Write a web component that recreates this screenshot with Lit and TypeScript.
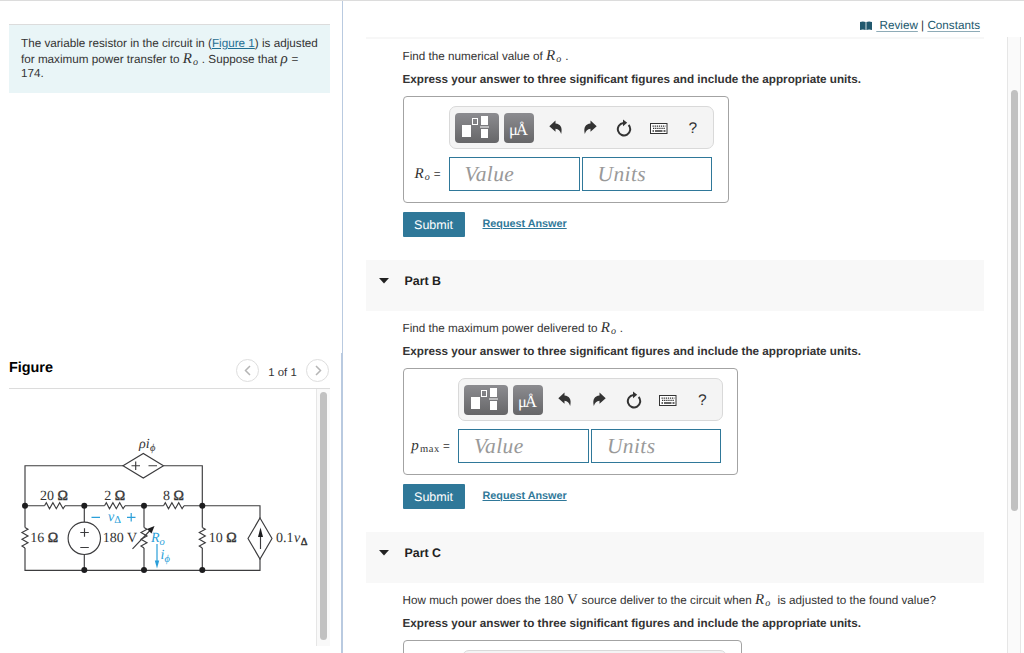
import {LitElement, html, svg, css, nothing} from 'lit';
import {customElement, property} from 'lit/decorators.js';
import {styleMap} from 'lit/directives/style-map.js';

const resistor = (x: number, y: number, vertical = false) => svg`
    <path
        transform="translate(${x} ${y}) rotate(${vertical ? 90 : 0})"
        d="M0 0 L1.8 -3 L5 3 L8.4 -3 L11.8 3 L15.2 -3 L18.6 3 L20.5 0"
    />
`;

@customElement('circuit-figure')
export class CircuitFigure extends LitElement {
    static styles = css`
        :host {
            display: block;
        }
        svg {
            display: block;
        }
        .wire {
            fill: none;
            stroke: #3c3c3e;
            stroke-width: 1.15;
        }
        .shape {
            fill: #fff;
        }
        .dot {
            fill: #1d1d1f;
        }
        text {
            font-family: "Liberation Serif", serif;
            font-size: 14px;
            fill: #333;
        }
        .ohm {
            stroke: #333;
            stroke-width: 0.4;
        }
        .italic {
            font-style: italic;
        }
        .sub {
            font-size: 10.5px;
        }
        .blue {
            fill: #2b9fd9;
        }
        .blue-line {
            fill: none;
            stroke: #2b9fd9;
            stroke-width: 1.2;
        }
    `;
    render() {
        return html`
            <svg width="307" height="256" viewBox="9 389 307 256">
                <g class="wire">
                    <path d="M25 527.5V465.7H123M163.5 465.7H202.3V527.5M202.3 548V570M25 548V570.3H260V559M260 518V505.7H184" />
                    <path d="M25 505.7H44.5M65 505.7H104.5M125 505.7H163.5" />
                    <path d="M84.3 505.7V522M84.3 554.5V570M144 505.7V527.5M144 548V570" />
                    ${resistor(44.5, 505.7)}
                    ${resistor(104.5, 505.7)}
                    ${resistor(163.5, 505.7)}
                    ${resistor(25, 527.5, true)}
                    ${resistor(144, 527.5, true)}
                    ${resistor(202.3, 527.5, true)}
                    <path class="shape" d="M123 465.7L143.3 453.5L163.5 465.7L143.3 478Z" />
                    <path class="shape" d="M260 518L272 538.5L260 559L248 538.5Z" />
                    <circle class="shape" cx="84.3" cy="538.3" r="16.2" />
                    <path d="M131.5 465.7h8.5M135.7 461.5v8.5M148.5 465.7h8.5" />
                    <path d="M80.3 532.5h8.5M84.5 528.2v8.5M80.3 547.5h8.5" />
                    <path d="M132.5 548.8L150 530.5M260.5 549V534" />
                </g>
                <g class="dot">
                    <path d="M154.5 526L151.5 533.5L147 529Z" />
                    <path d="M260.5 527.5L263 537H258Z" />
                    <circle cx="25" cy="505.7" r="3" />
                    <circle cx="84.3" cy="505.7" r="3" />
                    <circle cx="144" cy="505.7" r="3" />
                    <circle cx="202.3" cy="505.7" r="3" />
                    <circle cx="84.3" cy="570" r="3" />
                    <circle cx="144" cy="570" r="3" />
                    <circle cx="202.3" cy="570" r="3" />
                </g>
                <text class="italic" x="139" y="448">ρi<tspan class="sub" dx="0.5" dy="2.5">ϕ</tspan></text>
                <text x="40" y="499.5">20 <tspan class="ohm">Ω</tspan></text>
                <text x="104.3" y="499.5">2 <tspan class="ohm">Ω</tspan></text>
                <text x="163" y="499.5">8 <tspan class="ohm">Ω</tspan></text>
                <text x="30.2" y="542">16 <tspan class="ohm">Ω</tspan></text>
                <text x="102.7" y="542">180 V</text>
                <text x="208.7" y="542">10 <tspan class="ohm">Ω</tspan></text>
                <text x="276" y="542">0.1<tspan class="italic" dx="0.5">v</tspan><tspan class="sub ohm" dx="0.5" dy="2.8">Δ</tspan></text>
                <g class="blue-line">
                    <path d="M91.5 517.3h8.5M127 517.3h8.5M131.2 513v8.5M157 544V562" />
                </g>
                <path class="blue" d="M157 568.5L154.8 560.5H159.2Z" />
                <text class="blue italic" x="108" y="520.5">v<tspan class="sub" dy="2" font-style="normal">Δ</tspan></text>
                <text class="blue italic" x="151" y="542">R<tspan class="sub" dy="2.5">o</tspan></text>
                <text class="blue italic" x="160.5" y="559">i<tspan class="sub" dy="3">ϕ</tspan></text>
            </svg>
        `;
    }
}

@customElement('answer-box')
export class AnswerBox extends LitElement {
    @property({type: Number}) labelWidth = 45;
    @property({type: Boolean}) loading = false;

    static styles = css`
        :host {
            display: block;
        }
        .box {
            display: inline-grid;
            grid-template-columns: auto 265px;
            grid-template-rows: 43px 34px;
            row-gap: 8px;
            box-sizing: border-box;
            height: 107px;
            padding: 9px 14px 0 0;
            border: 1px solid #a3a3a3;
            border-radius: 4px;
            vertical-align: top;
        }
        .toolbar {
            grid-column: 2;
            display: flex;
            align-items: center;
            box-sizing: border-box;
            padding-left: 5px;
            background: #f4f4f4;
            border: 1px solid #d9d9d9;
            border-radius: 7px;
        }
        .key {
            width: 30px;
            height: 30px;
            margin-right: 5px;
            border-radius: 4px;
            background: linear-gradient(#8c8c90, #666668);
            color: #fff;
        }
        .key.wide {
            width: 44px;
        }
        svg {
            display: block;
        }
        .key text {
            font: 16.5px "Liberation Serif", serif;
            fill: #fff;
        }
        .tool {
            width: 34.3px;
            display: flex;
            justify-content: center;
        }
        .help {
            padding-top: 2px;
            color: #333;
            font-size: 15.5px;
        }
        .label {
            box-sizing: border-box;
            padding-right: 8px;
            align-self: center;
            text-align: right;
            white-space: nowrap;
        }
        .fields {
            display: flex;
            gap: 2px;
        }
        .field {
            box-sizing: border-box;
            width: 131px;
            height: 34px;
            padding-left: 15px;
            border: 1px solid #2f7899;
            background: #fff;
            color: #999;
            font: italic 21.5px/32px "Liberation Serif", serif;
            letter-spacing: 0.4px;
        }
        .field + .field {
            width: 130px;
        }
    `;
    tools() {
        return html`
            <div class="key wide">
                <svg width="44" height="30" fill="#fff">
                    <rect x="7" y="12" width="9" height="12" />
                    <rect x="17.5" y="5.5" width="5" height="6" fill="none" stroke="#fff" />
                    <rect x="26" y="3" width="7" height="9" />
                    <rect x="25" y="13.5" width="9" height="1" />
                    <rect x="26" y="16" width="7" height="9" />
                </svg>
            </div>
            <div class="key">
                <svg width="30" height="30">
                    <text x="5" y="21.5" textLength="19">μÅ</text>
                </svg>
            </div>
            <div class="tool">
                <svg width="14" height="15" fill="#333">
                    <path d="M0.3 6.2L6.5 0.5V3.6C11.5 4 13.6 7.5 12.2 14C11 10.7 9.5 9 6.5 8.8V11.7Z" />
                </svg>
            </div>
            <div class="tool">
                <svg width="14" height="15" fill="#333">
                    <path d="M13.7 6.2L7.5 0.5V3.6C2.5 4 0.4 7.5 1.8 14C3 10.7 4.5 9 7.5 8.8V11.7Z" />
                </svg>
            </div>
            <div class="tool">
                <svg width="16" height="18">
                    <path d="M7.5 4A6.2 6.2 0 1 0 12.6 6" fill="none" stroke="#333" stroke-width="2" />
                    <path d="M7 0.6L11.2 3.7L7 7.2Z" fill="#333" />
                </svg>
            </div>
            <div class="tool">
                <svg width="18" height="15" viewBox="0 -3 18 15">
                    <rect x="0.5" y="0.5" width="16.5" height="10" fill="#fff" stroke="#333" />
                    <path d="M2.5 3.2H15.5M3 5.3H15.5" stroke="#333" stroke-width="1.3" stroke-dasharray="1.3 0.8" />
                    <path d="M2.5 8H4M5 8H12.5M13.5 8H15.5" stroke="#333" stroke-width="1.6" />
                </svg>
            </div>
            <div class="tool help">?</div>
        `;
    }
    render() {
        return html`
            <div class="box">
                <div class="toolbar">${this.loading ? nothing : this.tools()}</div>
                <div class="label" style=${styleMap({width: `${this.labelWidth}px`})}><slot></slot></div>
                ${this.loading ? nothing : html`
                    <div class="fields">
                        <div class="field">Value</div>
                        <div class="field">Units</div>
                    </div>
                `}
            </div>
        `;
    }
}

@customElement('part-section')
export class PartSection extends LitElement {
    @property() heading = '';
    @property({type: Number}) labelWidth = 45;
    @property({type: Boolean}) loading = false;

    static styles = css`
        :host {
            display: block;
        }
        .heading {
            display: flex;
            align-items: center;
            box-sizing: border-box;
            height: 51px;
            padding: 0 0 9px 13px;
            background: #f8f8f8;
            color: #222;
            font-size: 12.4px;
            font-weight: bold;
        }
        .heading svg {
            margin-right: 15.5px;
        }
        .body {
            padding: 5px 0 23px 36.5px;
        }
        .line {
            height: 24px;
            line-height: 24px;
            white-space: nowrap;
        }
        .prompt {
            line-height: 26px;
        }
        .bold {
            font-weight: bold;
        }
        answer-box {
            margin-top: 4px;
        }
        .actions {
            display: flex;
            margin-top: 9px;
        }
        .submit {
            width: 62px;
            height: 25px;
            margin-right: 18px;
            border-radius: 1px;
            background: #2f7899;
            color: #fff;
            font-size: 12.5px;
            line-height: 26px;
            text-align: center;
        }
        .request {
            color: #2f7899;
            font-size: 10.8px;
            font-weight: bold;
            line-height: 24px;
            text-decoration: underline;
        }
    `;
    render() {
        return html`
            ${this.heading ? html`
                <div class="heading">
                    <svg width="10" height="6"><path d="M0 0H10L5 5.5Z" fill="#222" /></svg>
                    ${this.heading}
                </div>
            ` : nothing}
            <div class="body">
                <div class="line prompt"><slot name="prompt"></slot></div>
                <div class="line bold">Express your answer to three significant figures and include the appropriate units.</div>
                <answer-box .labelWidth=${this.labelWidth} .loading=${this.loading}><slot name="label"></slot></answer-box>
                ${this.loading ? nothing : html`
                    <div class="actions">
                        <div class="submit">Submit</div>
                        <a class="request">Request Answer</a>
                    </div>
                `}
            </div>
        `;
    }
}

@customElement('app-root')
export class AppRoot extends LitElement {
    static styles = css`
        :host {
            display: flex;
            box-sizing: border-box;
            width: 1024px;
            height: 653px;
            overflow: hidden;
            border-top: 1px solid #dcdcdc;
            background: #fff;
            color: #333;
            font: 11.69px "Liberation Sans", Arial, sans-serif;
            text-rendering: geometricPrecision;
        }
        .left {
            display: flex;
            flex-direction: column;
            width: 343px;
        }
        .top {
            box-sizing: border-box;
            height: 352px;
            padding: 23px 12px 0 9px;
            border-right: 1px solid #b9cae0;
        }
        .intro {
            box-sizing: border-box;
            height: 69px;
            padding: 12px 0 0 12px;
            border-top: 1px solid #dcdcdc;
            background: #e9f5f7;
            line-height: 14.7px;
            white-space: nowrap;
        }
        .intro a {
            color: #1f6f93;
            text-decoration: underline;
        }
        .bottom {
            flex: 1;
            padding-left: 9px;
            border-right: 2px solid #b9cae0;
        }
        .figure-head {
            display: flex;
            box-sizing: border-box;
            width: 321px;
            height: 36px;
            padding: 6px 1px 0 0;
            border-bottom: 1px solid #dcdcdc;
        }
        .title {
            flex: 1;
            color: #000;
            font-size: 14.4px;
            font-weight: bold;
            line-height: 18px;
        }
        .count {
            width: 47px;
            line-height: 28px;
            font-size: 11.4px;
            text-align: center;
        }
        .round {
            box-sizing: border-box;
            width: 23px;
            height: 23px;
            border: 1px solid #dedede;
            border-radius: 50%;
        }
        .figure {
            display: flex;
            width: 321px;
            height: 257px;
        }
        .track {
            box-sizing: border-box;
            width: 14px;
            height: 257px;
            padding: 3px 3px 0;
            border-left: 1px solid #e6e6e6;
            background: #f9f9f9;
        }
        .thumb {
            width: 7px;
            height: 248px;
            border-radius: 4px;
            background: #c1c1c1;
        }
        .right {
            flex: 1;
            display: flex;
            flex-direction: column;
        }
        .links {
            box-sizing: border-box;
            display: flex;
            justify-content: flex-end;
            height: 36px;
            padding: 15px 44px 0 0;
            line-height: 20px;
            white-space: pre;
        }
        .links a {
            color: #22596e;
            text-decoration: underline;
            text-decoration-color: #8eabb7;
            text-underline-offset: 2px;
        }
        .links svg {
            margin: 5px 4px 0 0;
        }
        .scroller {
            flex: 1;
            display: flex;
            min-height: 0;
            padding-left: 23px;
        }
        .parts {
            width: 618px;
            overflow: hidden;
            border-top: 2px solid #f7f7f7;
        }
        .page-track {
            box-sizing: border-box;
            width: 14px;
            margin-left: 23px;
            padding: 53px 2px 0 3px;
            border: solid #e6e6e6;
            border-width: 0 1px;
            background: #fafafa;
        }
        .page-track .thumb {
            height: 421px;
        }
        .math {
            font-family: "Liberation Serif", serif;
            font-size: 15px;
            font-style: italic;
            line-height: 1;
            letter-spacing: 0.6px;
        }
        .math.roman {
            font-style: normal;
        }
        .math small {
            position: relative;
            top: 2px;
            margin-left: 0.5px;
            font-size: 10px;
        }
        .math .word {
            font-size: 10.5px;
            font-style: normal;
        }
    `;
    ro() {
        return html`<span class="math">R<small>o</small></span>`;
    }
    render() {
        return html`
            <div class="left">
                <div class="top">
                    <div class="intro">
                        The variable resistor in the circuit in (<a>Figure 1</a>) is adjusted<br />
                        for maximum power transfer to ${this.ro()} . Suppose that <span class="math">ρ</span> =<br />
                        174.
                    </div>
                </div>
                <div class="bottom">
                    <div class="figure-head">
                        <div class="title">Figure</div>
                        <div class="round">
                            <svg width="21" height="21"><path d="M13 6L8.5 10.5L13 15" fill="none" stroke="#b5b5b5" stroke-width="1.5" /></svg>
                        </div>
                        <div class="count">1 of 1</div>
                        <div class="round">
                            <svg width="21" height="21"><path d="M9 6L13.5 10.5L9 15" fill="none" stroke="#b5b5b5" stroke-width="1.5" /></svg>
                        </div>
                    </div>
                    <div class="figure">
                        <circuit-figure></circuit-figure>
                        <div class="track"><div class="thumb"></div></div>
                    </div>
                </div>
            </div>
            <div class="right">
                <div class="links">
                    <svg width="12" height="10" fill="#22596e">
                        <path d="M0 1Q3 0 5.6 1V9Q3 8 0 9ZM6.4 1Q9 0 12 1V9Q9 8 6.4 9Z" />
                    </svg><a> Review</a> | <a>Constants</a>
                </div>
                <div class="scroller">
                    <div class="parts">
                        <part-section>
                            <span slot="prompt">Find the numerical value of ${this.ro()} .</span>
                            <span slot="label">${this.ro()} =</span>
                        </part-section>
                        <part-section heading="Part B" .labelWidth=${54.4}>
                            <span slot="prompt">Find the maximum power delivered to ${this.ro()} .</span>
                            <span slot="label"><span class="math">p<small class="word">max</small></span> =</span>
                        </part-section>
                        <part-section heading="Part C" .labelWidth=${58.4} .loading=${true}>
                            <span slot="prompt">How much power does the 180 <span class="math roman">V</span> source deliver to the circuit when ${this.ro()}&nbsp; is adjusted to the found value?</span>
                        </part-section>
                    </div>
                    <div class="page-track"><div class="thumb"></div></div>
                </div>
            </div>
        `;
    }
}
